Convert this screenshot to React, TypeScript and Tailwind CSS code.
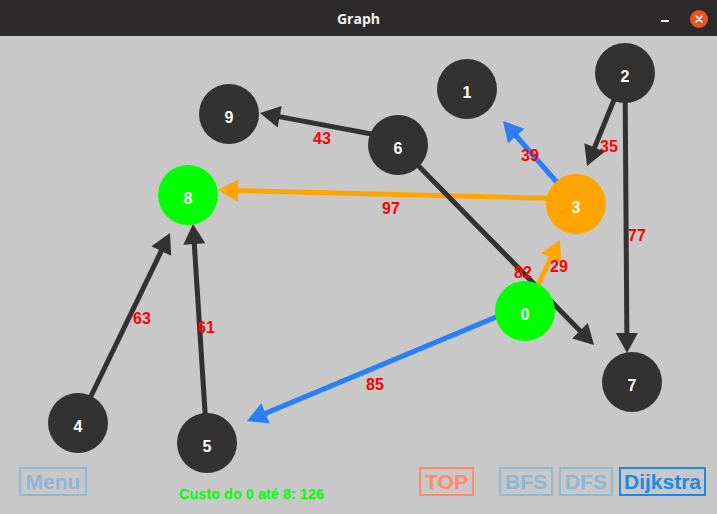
import React from "react";

type Pt = [number, number];

const DARK = "#323232";
const BLUE = "#2b7ff5";
const ORANGE = "#ffa500";
const GREEN = "#00ff00";

const nodes: { id: number; x: number; y: number; fill: string }[] = [
    { id: 0, x: 525, y: 311, fill: GREEN },
    { id: 1, x: 467, y: 89, fill: DARK },
    { id: 2, x: 625, y: 73, fill: DARK },
    { id: 3, x: 576, y: 204, fill: ORANGE },
    { id: 4, x: 78, y: 423, fill: DARK },
    { id: 5, x: 207, y: 443, fill: DARK },
    { id: 6, x: 398, y: 145, fill: DARK },
    { id: 7, x: 632, y: 382, fill: DARK },
    { id: 8, x: 188, y: 195, fill: GREEN },
    { id: 9, x: 229, y: 114, fill: DARK },
];

const edges: { from: Pt; to: Pt; color: string; w: number; label: Pt }[] = [
    { from: [398, 139], to: [260, 113], color: DARK, w: 43, label: [322, 138] },
    { from: [576, 199], to: [218, 190], color: ORANGE, w: 97, label: [391, 208] },
    { from: [398, 145], to: [594, 345], color: DARK, w: 82, label: [523, 272] },
    { from: [625, 73], to: [587, 166], color: DARK, w: 35, label: [609, 146] },
    { from: [625, 73], to: [627, 353], color: DARK, w: 77, label: [637, 235] },
    { from: [576, 204], to: [503, 121], color: BLUE, w: 39, label: [530, 155] },
    { from: [525, 311], to: [560, 240], color: ORANGE, w: 29, label: [559, 266] },
    { from: [525, 305], to: [247, 421], color: BLUE, w: 85, label: [375, 384] },
    { from: [78, 423], to: [170, 233], color: DARK, w: 63, label: [142, 318] },
    { from: [207, 443], to: [193, 224], color: DARK, w: 61, label: [206, 327] },
];

function Arrow({ from, to, color }: { from: Pt; to: Pt; color: string }) {
    const dx = to[0] - from[0];
    const dy = to[1] - from[1];
    const len = Math.hypot(dx, dy);
    const ux = dx / len;
    const uy = dy / len;
    const bx = to[0] - ux * 20;
    const by = to[1] - uy * 20;
    const px = -uy * 11;
    const py = ux * 11;
    return (
        <g>
            <line x1={from[0]} y1={from[1]} x2={bx + ux * 2} y2={by + uy * 2} stroke={color} strokeWidth={5} />
            <polygon points={`${to[0]},${to[1]} ${bx + px},${by + py} ${bx - px},${by - py}`} fill={color} />
        </g>
    );
}

function Btn({ label, className }: { label: string; className: string }) {
    return (
        <div className={`flex h-[29px] items-center justify-center border-2 text-[21px] font-bold leading-none ${className}`}>
            {label}
        </div>
    );
}

export default function App() {
    return (
        <div className="flex h-[514px] w-[717px] flex-col overflow-hidden bg-[#c8c8c8] font-['Liberation_Sans',Arial,sans-serif]">
            <header className="relative flex h-[36px] shrink-0 items-center justify-center bg-[#2c2a2a]">
                <span className="font-['Open_Sans',sans-serif] text-[14px] font-bold text-[#f2f2f2]">Graph</span>
                <span className="absolute left-[661px] top-[20px] h-[2px] w-[8px] bg-[#f0f0f0]" />
                <span className="absolute left-[690px] top-[10px] flex h-[18px] w-[18px] items-center justify-center rounded-full bg-[#e9541f]">
                    <svg width="8" height="8" viewBox="0 0 8 8">
                        <path d="M1 1 L7 7 M7 1 L1 7" stroke="#ffffff" strokeWidth="1.6" strokeLinecap="round" />
                    </svg>
                </span>
            </header>

            <div className="relative h-[431px] shrink-0">
                <svg width={717} height={478} viewBox="0 36 717 478" className="absolute left-0 top-0 overflow-visible">
                    {edges.map((e, i) => (
                        <Arrow key={i} from={e.from} to={e.to} color={e.color} />
                    ))}
                    {nodes.map((n) => (
                        <g key={n.id}>
                            <circle cx={n.x} cy={n.y} r={30} fill={n.fill} />
                            <text
                                x={n.x}
                                y={n.y + 9}
                                textAnchor="middle"
                                fill="#ffffff"
                                fontSize={16}
                                fontWeight={700}
                                fontFamily="Liberation Sans, Arial, sans-serif"
                            >
                                {n.id}
                            </text>
                        </g>
                    ))}
                    {edges.map((e, i) => (
                        <text
                            key={i}
                            x={e.label[0]}
                            y={e.label[1] + 6}
                            textAnchor="middle"
                            fill="#ff0000"
                            fontSize={16}
                            fontWeight={700}
                            fontFamily="Liberation Sans, Arial, sans-serif"
                        >
                            {e.w}
                        </text>
                    ))}
                </svg>
            </div>

            <footer className="relative flex items-start pl-[19px]">
                <Btn label="Menu" className="w-[68px] border-[#90b9d5] text-[#8cb6d4]" />
                <div className="ml-[92px] mt-[18px] w-[240px] text-[14.5px] font-bold leading-[18px] text-[#00ff00]">
                    Custo do 0 até 8: 126
                </div>
                <Btn label="TOP" className="w-[55px] border-[#ff8a65] text-[#ff8a65]" />
                <Btn label="BFS" className="ml-[25px] w-[54px] border-[#90b9d5] text-[#8cb6d4]" />
                <Btn label="DFS" className="ml-[6px] w-[54px] border-[#90b9d5] text-[#8cb6d4]" />
                <Btn label="Dijkstra" className="ml-[6px] w-[87px] border-[#1e88e5] text-[#1e88e5]" />
            </footer>
        </div>
    );
}
